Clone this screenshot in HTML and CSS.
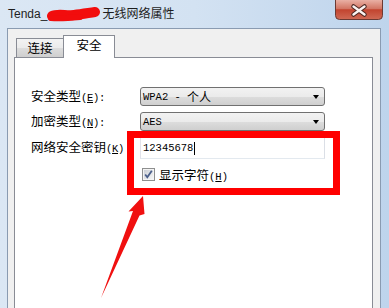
FILE: index.html
```html
<!DOCTYPE html>
<html>
<head>
<meta charset="utf-8">
<link rel="stylesheet" href="styles.css">
</head>
<body>
<div class="window">
  <div class="titlebar">
    <span class="title">Tenda_<svg class="scribble" width="55" height="18" viewBox="0 0 55 18"><path d="M6,11 C12,8 20,11 28,10 C36,9 42,8 49,7" fill="none" stroke="#f20d0d" stroke-width="10" stroke-linecap="round"/><path d="M5,13 C14,14 24,13 34,12" fill="none" stroke="#f20d0d" stroke-width="6" stroke-linecap="round"/></svg>无线网络属性</span>
    <div class="close">
      <svg width="48" height="20" viewBox="0 0 48 20">
        <defs>
          <linearGradient id="cg" x1="0" y1="0" x2="0" y2="1">
            <stop offset="0" stop-color="#e9b0a4"/>
            <stop offset="0.45" stop-color="#d27563"/>
            <stop offset="0.5" stop-color="#c2442f"/>
            <stop offset="1" stop-color="#d06a55"/>
          </linearGradient>
        </defs>
        <path d="M0.5,0 L0.5,15.5 Q0.5,19.5 4.5,19.5 L43.5,19.5 Q47.5,19.5 47.5,15.5 L47.5,0" fill="url(#cg)" stroke="#6b3a33"/>
        <path d="M18.5,6.5 L29.5,14.5 M29.5,6.5 L18.5,14.5" stroke="#4a2620" stroke-width="4.5" stroke-linecap="round"/>
        <path d="M18.5,6.5 L29.5,14.5 M29.5,6.5 L18.5,14.5" stroke="#fbf4f2" stroke-width="2.4" stroke-linecap="round"/>
      </svg>
    </div>
  </div>
  <div class="panel">
    <div class="tabs">
      <div class="tab">连接</div>
      <div class="tab active">安全</div>
    </div>
    <div class="page">
      <div class="form">
        <div class="lbl">安全类型<span class="lat">(<u>E</u>):</span></div>
        <div class="combo"><span class="lat">WPA2 - </span>个人<i class="caret-down"></i></div>
        <div class="lbl">加密类型<span class="lat">(<u>N</u>):</span></div>
        <div class="combo"><span class="lat">AES</span><i class="caret-down"></i></div>
        <div class="lbl">网络安全密钥<span class="lat">(<u>K</u>)</span></div>
        <div class="field"><span class="lat">12345678</span><i class="cursor"></i></div>
        <div class="check-row">
          <svg class="check" width="13" height="13" viewBox="0 0 13 13">
            <defs>
              <linearGradient id="bg" x1="0" y1="0" x2="1" y2="1">
                <stop offset="0" stop-color="#cbcfd5"/>
                <stop offset="1" stop-color="#f6f6f6"/>
              </linearGradient>
            </defs>
            <rect x="0.5" y="0.5" width="12" height="12" fill="#f4f4f4" stroke="#8e8f8f"/>
            <rect x="2" y="2" width="9" height="9" fill="url(#bg)"/>
            <path d="M3.2,6.5 L5.3,9.2 L9.8,2.8" fill="none" stroke="#4b5f8a" stroke-width="1.8"/>
          </svg>
          <span class="check-text">显示字符<span class="lat">(<u>H</u>)</span></span>
        </div>
      </div>
    </div>
  </div>
</div>
<div class="redbox"></div>
<svg class="annot" width="389" height="308" viewBox="0 0 389 308">
  <path d="M143,196 L144.5,214 L139.5,215.5 L101,298 L133,211 L128.5,211.5 Z" fill="#f01010"/>
</svg>
</body>
</html>
```

FILE: styles.css
```css
html, body {
  margin: 0;
  padding: 0;
}
body {
  width: 389px;
  height: 308px;
  overflow: hidden;
  position: relative;
  font-family: "Noto Sans CJK SC", sans-serif;
  font-size: 12px;
  color: #000;
  background: #c9dcf0;
}
.window {
  height: 308px;
  box-sizing: border-box;
  padding: 0 8px 0 7px;
  display: flex;
  flex-direction: column;
  background: linear-gradient(to right, #dbe7f4 0%, #d3e2f2 50%, #bed4ec 100%);
}
.titlebar {
  height: 28px;
  display: flex;
  align-items: flex-start;
}
.title {
  margin-left: 1px;
  margin-top: 5px;
  font-family: "Liberation Sans", "Noto Sans CJK SC", sans-serif;
  font-size: 12px;
  line-height: 18px;
  color: #1e1e1e;
  display: flex;
  align-items: center;
}
.scribble {
  display: block;
  margin: 0 1px 0 -1px;
}
.close {
  margin-left: auto;
  margin-right: -2px;
  width: 48px;
  height: 20px;
}
.close svg {
  display: block;
}
.panel {
  flex: 1;
  display: flex;
  flex-direction: column;
  border: 1px solid #8a9bb1;
  border-bottom: none;
  background: #f0f0f0;
  padding: 6px 7px 0 6px;
  min-height: 0;
}
.tabs {
  display: flex;
  align-items: flex-end;
  height: 22px;
}
.tab {
  box-sizing: border-box;
  width: 47px;
  height: 19px;
  margin-left: 2px;
  border: 1px solid #898c95;
  border-bottom: none;
  border-right: none;
  background: linear-gradient(#f3f3f3 0%, #ebebeb 50%, #dddddd 50%, #cfcfcf 100%);
  text-align: center;
  line-height: 18px;
  font-size: 12.5px;
}
.tab.active {
  width: 52px;
  height: 23px;
  margin-left: 0;
  margin-bottom: -1px;
  border-right: 1px solid #898c95;
  background: #fff;
  line-height: 18px;
  position: relative;
  z-index: 1;
}
.page {
  flex: 1;
  border: 1px solid #898c95;
  border-bottom: none;
  background: #fff;
}
.form {
  display: grid;
  grid-template-columns: 109px 185px;
  grid-template-rows: 19px 19px 22px 18px;
  row-gap: 6px;
  padding: 29px 0 0 16px;
  align-items: center;
}
.lbl {
  font-size: 12.5px;
  line-height: 14px;
  white-space: nowrap;
}
.lat {
  font-family: "Liberation Mono", monospace;
  font-size: 10.5px;
}
.lbl .lat {
  letter-spacing: -0.3px;
}
.combo {
  box-sizing: border-box;
  height: 19px;
  border: 1px solid #707070;
  border-radius: 3px;
  background: linear-gradient(#f2f2f2 0%, #ebebeb 50%, #dddddd 50%, #cfcfcf 100%);
  padding-left: 2px;
  display: flex;
  align-items: center;
  white-space: pre;
  font-size: 12px;
}
.caret-down {
  margin-left: auto;
  margin-right: 5px;
  width: 0;
  height: 0;
  border-left: 3.5px solid transparent;
  border-right: 3.5px solid transparent;
  border-top: 4px solid #000;
}
.field {
  box-sizing: border-box;
  height: 22px;
  border: 1px solid;
  border-color: #abadb3 #dbdfe6 #e3e9ef #e2e3ea;
  background: #fff;
  padding-left: 2px;
  display: flex;
  align-items: center;
}
.cursor {
  width: 1px;
  height: 13px;
  background: #000;
  margin-left: 1px;
}
.check-row {
  grid-column: 2;
  display: flex;
  align-items: center;
  padding-left: 2px;
}
.check {
  display: block;
}
.check-text {
  margin-left: 4px;
  font-size: 12.5px;
}
.redbox {
  position: absolute;
  left: 127px;
  top: 131px;
  width: 213px;
  height: 64px;
  box-sizing: border-box;
  border: 7px solid #ff0000;
}
.annot {
  position: absolute;
  left: 0;
  top: 0;
  pointer-events: none;
}
```
